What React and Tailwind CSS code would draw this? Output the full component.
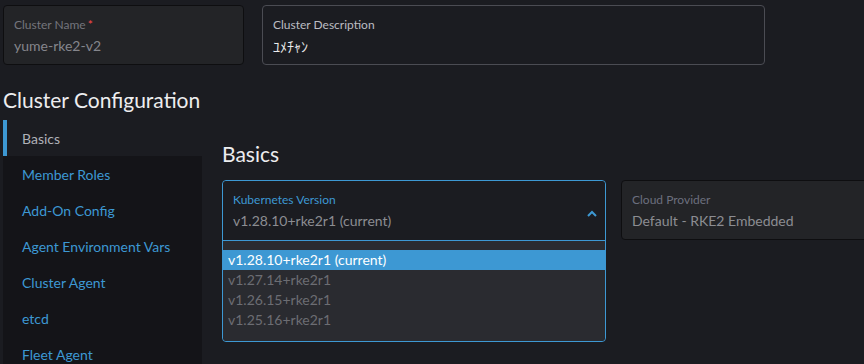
import React from "react";

const navItems = [
  "Member Roles",
  "Add-On Config",
  "Agent Environment Vars",
  "Cluster Agent",
  "etcd",
  "Fleet Agent",
];

const versions = [
  "v1.27.14+rke2r1",
  "v1.26.15+rke2r1",
  "v1.25.16+rke2r1",
];

function Field({ label, value, required, className, labelClass, valueClass }) {
  return (
    <div className={`rounded-[4px] border pt-[10px] px-[10px] ${className}`}>
      <div className={`text-[12px] leading-[18px] ${labelClass}`}>
        {label}
        {required && <span className="text-[#f64747] ml-[2px]">*</span>}
      </div>
      <div className={`text-[14px] leading-[24px] ${valueClass}`}>{value}</div>
    </div>
  );
}

export default function App() {
  return (
    <div
      className="w-[864px] h-[364px] overflow-hidden bg-[#1b1c21] pl-[3px] pt-[5px]"
      style={{ fontFamily: "Lato, 'Noto Sans', sans-serif" }}
    >
      <div className="flex gap-[18px]">
        <Field
          label="Cluster Name"
          value="yume-rke2-v2"
          required
          className="w-[241px] h-[60px] bg-[#232427] border-[#0e0e10]"
          labelClass="text-[#74757c]"
          valueClass="text-[#85868c]"
        />
        <Field
          label="Cluster Description"
          value={<span style={{ fontFamily: "'Noto Sans CJK JP', sans-serif" }}>ﾕﾒﾁｬﾝ</span>}
          className="w-[503px] h-[60px] bg-[#1b1c21] border-[#4b4c53]"
          labelClass="text-[#bcbdc3]"
          valueClass="text-[#ececee]"
        />
      </div>

      <h1 className="mt-[22px] mb-[7px] text-[21px] leading-[26px] text-[#ededef]">
        Cluster Configuration
      </h1>

      <div className="flex">
        <div className="w-[199px] shrink-0 bg-[#141418] h-[300px]">
          <div className="h-[36px] bg-[#1b1c21] border-l-4 border-[#3d98d3] pl-[15px] flex items-center text-[14px] text-[#b0b1b8]">
            Basics
          </div>
          {navItems.map((item) => (
            <div
              key={item}
              className="h-[36px] pl-[19px] flex items-center text-[14px] text-[#3d98d3]"
            >
              {item}
            </div>
          ))}
        </div>

        <div className="flex-1 pl-[20px]">
          <h2 className="mt-[22px] mb-[14px] text-[21px] leading-[24px] text-[#ededef]">
            Basics
          </h2>
          <div className="flex gap-[15px] items-start">
            <div className="w-[384px] shrink-0 rounded-[4px] border border-[#3d98d3]">
              <div className="h-[60px] relative pt-[10px] px-[10px] border-b border-[#3d98d3] bg-[#1b1c21] rounded-t-[4px]">
                <div className="text-[12px] leading-[18px] text-[#3d98d3]">Kubernetes Version</div>
                <div className="text-[14px] leading-[24px] text-[#8c8d92]">
                  v1.28.10+rke2r1 (current)
                </div>
                <svg
                  className="absolute right-[8px] top-[29px]"
                  width="10"
                  height="7"
                  viewBox="0 0 10 7"
                  fill="none"
                >
                  <polyline points="1,6 5,2 9,6" stroke="#3d98d3" strokeWidth="2" />
                </svg>
              </div>
              <div className="bg-[#2a2b30] pt-[9px] pb-[11px] rounded-b-[4px]">
                <div className="h-[20px] bg-[#3d98d3] text-white text-[14px] leading-[20px] px-[5px]">
                  v1.28.10+rke2r1 (current)
                </div>
                {versions.map((v) => (
                  <div key={v} className="h-[20px] text-[#6c6d73] text-[14px] leading-[20px] px-[5px]">
                    {v}
                  </div>
                ))}
              </div>
            </div>
            <Field
              label="Cloud Provider"
              value="Default - RKE2 Embedded"
              className="w-[260px] h-[60px] shrink-0 bg-[#232427] border-[#0e0e10]"
              labelClass="text-[#6c6f7e]"
              valueClass="text-[#8c8d92]"
            />
          </div>
        </div>
      </div>
    </div>
  );
}
